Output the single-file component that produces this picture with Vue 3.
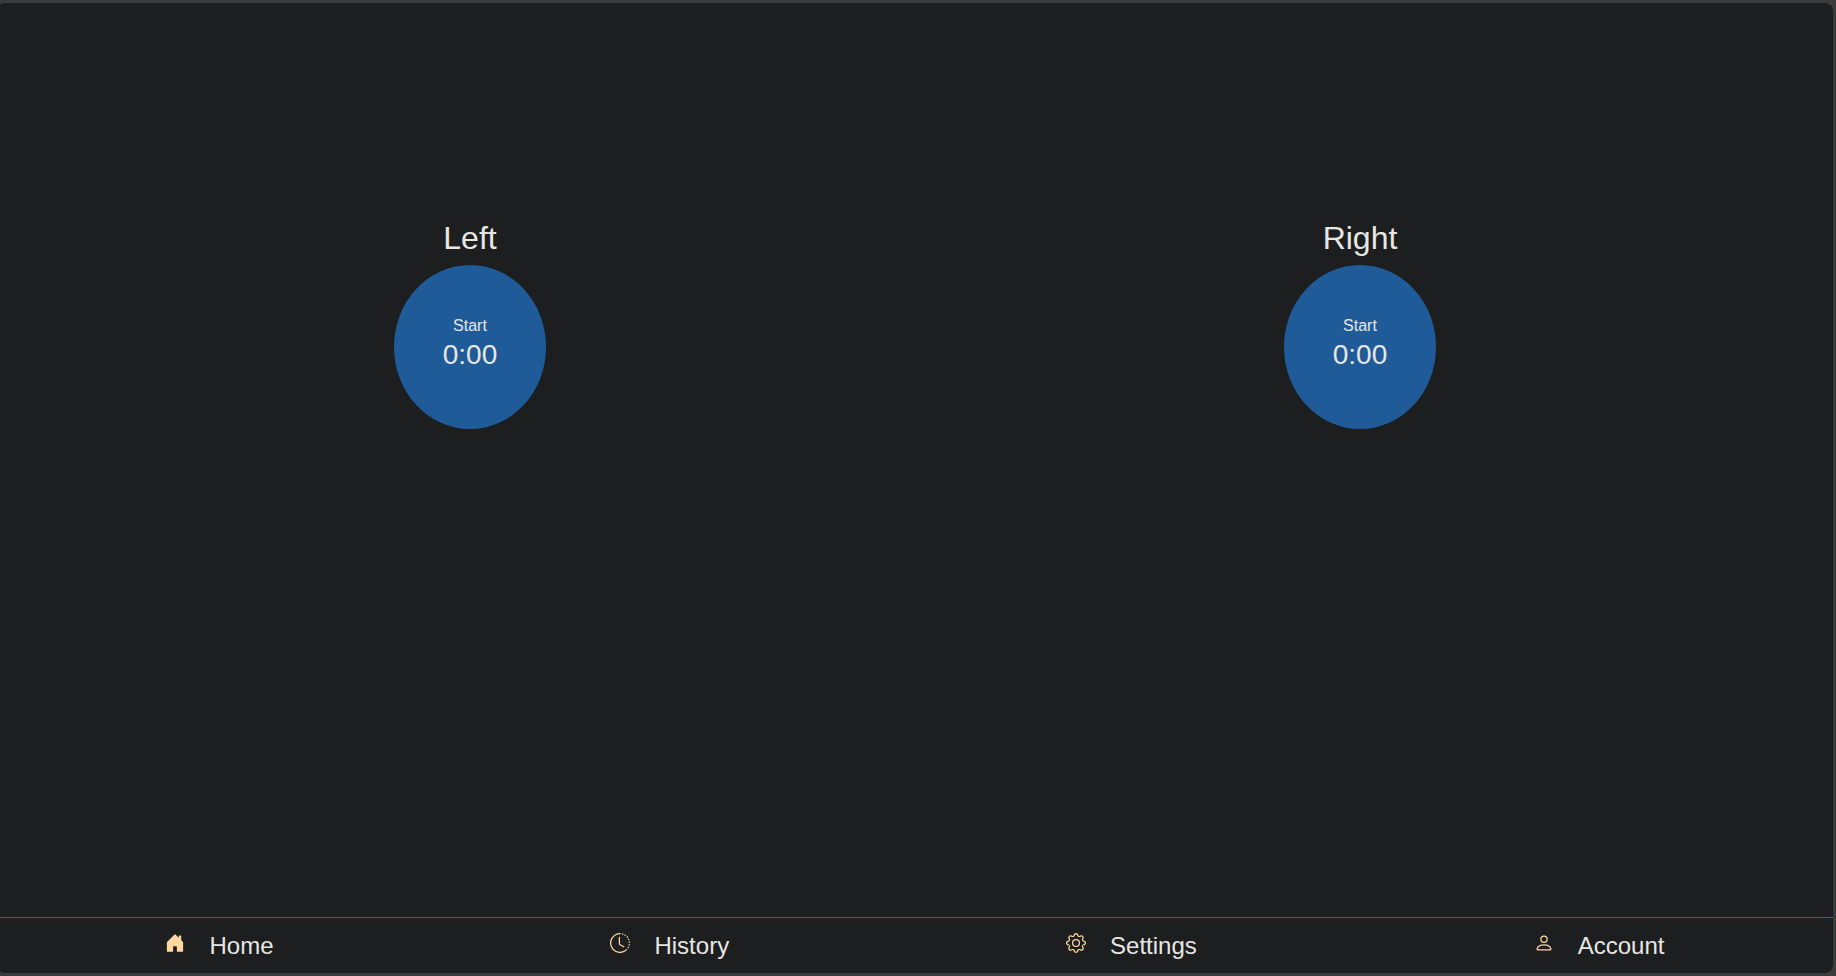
<script setup>
import { reactive, onBeforeUnmount } from 'vue'

const timers = reactive([
  { side: 'Left', seconds: 0, running: false },
  { side: 'Right', seconds: 0, running: false },
])

const links = [
  {
    label: 'Home',
    paths: [
      'M6.5 14.5v-3.505c0-.245.25-.495.5-.495h2c.25 0 .5.25.5.5v3.5a.5.5 0 0 0 .5.5h4a.5.5 0 0 0 .5-.5v-7a.5.5 0 0 0-.146-.354L13 5.793V2.5a.5.5 0 0 0-.5-.5h-1a.5.5 0 0 0-.5.5v1.293L8.354 1.146a.5.5 0 0 0-.708 0l-6 6A.5.5 0 0 0 1.5 7.5v7a.5.5 0 0 0 .5.5h4a.5.5 0 0 0 .5-.5',
    ],
  },
  {
    label: 'History',
    paths: [
      'M8.515 1.019A7 7 0 0 0 8 1V0a8 8 0 0 1 .589.022zm2.004.45a7 7 0 0 0-.985-.299l.219-.976q.576.129 1.126.342zm1.37.71a7 7 0 0 0-.439-.27l.493-.87a8 8 0 0 1 .979.654l-.615.789a7 7 0 0 0-.418-.302zm1.834 1.79a7 7 0 0 0-.653-.796l.724-.69q.406.429.747.91zm.744 1.352a7 7 0 0 0-.214-.468l.893-.45a8 8 0 0 1 .45 1.088l-.95.313a7 7 0 0 0-.179-.483m.53 2.507a7 7 0 0 0-.1-1.025l.985-.17q.1.58.116 1.17zm-.131 1.538q.05-.254.081-.51l.993.123a8 8 0 0 1-.23 1.155l-.964-.267q.069-.247.12-.501m-.952 2.379q.276-.436.486-.908l.914.405q-.24.54-.555 1.038zm-.964 1.205q.183-.183.35-.378l.758.653a8 8 0 0 1-.401.432z',
      'M8 1a7 7 0 1 0 4.95 11.95l.707.707A8.001 8.001 0 1 1 8 0z',
      'M7.5 3a.5.5 0 0 1 .5.5v5.21l3.248 1.856a.5.5 0 0 1-.496.868l-3.5-2A.5.5 0 0 1 7 9V3.5a.5.5 0 0 1 .5-.5',
    ],
  },
  {
    label: 'Settings',
    paths: [
      'M8 4.754a3.246 3.246 0 1 0 0 6.492 3.246 3.246 0 0 0 0-6.492M5.754 8a2.246 2.246 0 1 1 4.492 0 2.246 2.246 0 0 1-4.492 0',
      'M9.796 1.343c-.527-1.79-3.065-1.79-3.592 0l-.094.319a.873.873 0 0 1-1.255.52l-.292-.16c-1.64-.892-3.433.902-2.54 2.541l.159.292a.873.873 0 0 1-.52 1.255l-.319.094c-1.79.527-1.79 3.065 0 3.592l.319.094a.873.873 0 0 1 .52 1.255l-.16.292c-.892 1.64.901 3.434 2.541 2.54l.292-.159a.873.873 0 0 1 1.255.52l.094.319c.527 1.79 3.065 1.79 3.592 0l.094-.319a.873.873 0 0 1 1.255-.52l.292.16c1.64.893 3.434-.902 2.54-2.541l-.159-.292a.873.873 0 0 1 .52-1.255l.319-.094c1.79-.527 1.79-3.065 0-3.592l-.319-.094a.873.873 0 0 1-.52-1.255l.16-.292c.893-1.64-.902-3.433-2.541-2.54l-.292.159a.873.873 0 0 1-1.255-.52zm-2.633.283c.246-.835 1.428-.835 1.674 0l.094.319a1.873 1.873 0 0 0 2.693 1.115l.291-.16c.764-.415 1.6.42 1.184 1.185l-.159.292a1.873 1.873 0 0 0 1.116 2.692l.318.094c.835.246.835 1.428 0 1.674l-.319.094a1.873 1.873 0 0 0-1.115 2.693l.16.291c.415.764-.42 1.6-1.185 1.184l-.291-.159a1.873 1.873 0 0 0-2.693 1.116l-.094.318c-.246.835-1.428.835-1.674 0l-.094-.319a1.873 1.873 0 0 0-2.692-1.115l-.292.16c-.764.415-1.6-.42-1.184-1.185l.159-.291A1.873 1.873 0 0 0 1.945 8.93l-.319-.094c-.835-.246-.835-1.428 0-1.674l.319-.094A1.873 1.873 0 0 0 3.06 4.377l-.16-.292c-.415-.764.42-1.6 1.185-1.184l.292.159a1.873 1.873 0 0 0 2.692-1.115z',
    ],
  },
  {
    label: 'Account',
    paths: [
      'M8 8a3 3 0 1 0 0-6 3 3 0 0 0 0 6m2-3a2 2 0 1 1-4 0 2 2 0 0 1 4 0m4 8c0 1-1 1-1 1H3s-1 0-1-1 1-4 6-4 6 3 6 4m-1-.004c-.001-.246-.154-.986-.832-1.664C11.516 10.68 10.289 10 8 10s-3.516.68-4.168 1.332c-.678.678-.83 1.418-.832 1.664z',
    ],
  },
]

const clock = (s) => `${Math.floor(s / 60)}:${String(s % 60).padStart(2, '0')}`

const tick = setInterval(() => {
  for (const t of timers) if (t.running) t.seconds++
}, 1000)
onBeforeUnmount(() => clearInterval(tick))
</script>

<template>
  <div class="window">
    <div class="page">
      <main class="timers">
        <section v-for="t in timers" :key="t.side" class="timer">
          <h2 :id="'timer-' + t.side" class="side">{{ t.side }}</h2>
          <button
            type="button"
            class="dial"
            :aria-describedby="'timer-' + t.side"
            @click="t.running = !t.running"
          >
            <span class="action">{{ t.running ? 'Stop' : 'Start' }}</span>
            <span class="time">{{ clock(t.seconds) }}</span>
          </button>
        </section>
      </main>
      <nav class="tabs">
        <a v-for="link in links" :key="link.label" class="tab" :href="'#' + link.label.toLowerCase()">
          <svg class="icon" viewBox="0 0 16 16" aria-hidden="true">
            <path v-for="d in link.paths" :key="d" :d="d" />
          </svg>
          <span>{{ link.label }}</span>
        </a>
      </nav>
    </div>
  </div>
</template>

<style>
body {
  background: #3b3b3b;
}
</style>

<style scoped>
.window {
  box-sizing: border-box;
  display: flex;
  min-height: 100vh;
  padding: 3px 3px 3px 0;
  overflow: hidden;
  font-family: "Liberation Sans", Arial, sans-serif;
  color: #e8e6e3;
}
.page {
  flex: 1;
  display: flex;
  flex-direction: column;
  margin-left: -3px;
  border-radius: 8px;
  background: #1c1e1f;
  overflow: hidden;
}
.timers {
  flex: 1;
  display: grid;
  grid-template-columns: 1fr 1fr;
  align-items: start;
  padding: 216px 28px 0;
}
.timer {
  display: flex;
  flex-direction: column;
  align-items: center;
  gap: 8px;
}
.side {
  margin: 0;
  font-size: 32px;
  font-weight: 400;
  line-height: 38px;
}
.dial {
  display: flex;
  flex-direction: column;
  align-items: center;
  padding: 49px;
  border: 0;
  border-radius: 50%;
  background: #1f5b98;
  color: inherit;
  font-family: inherit;
  cursor: pointer;
}
.action {
  font-size: 16px;
  line-height: 24px;
}
.time {
  padding-bottom: 8px;
  font-size: 28px;
  line-height: 34px;
}
.tabs {
  display: flex;
  justify-content: space-around;
  border-top: 1px solid #864f10;
}
.tab {
  display: flex;
  align-items: center;
  gap: 24px;
  padding: 10px 0 9px;
  color: inherit;
  font-size: 24px;
  line-height: 36px;
  text-decoration: none;
}
.icon {
  width: 20px;
  height: 20px;
  margin-bottom: 6px;
  fill: #ffd79f;
}
</style>
